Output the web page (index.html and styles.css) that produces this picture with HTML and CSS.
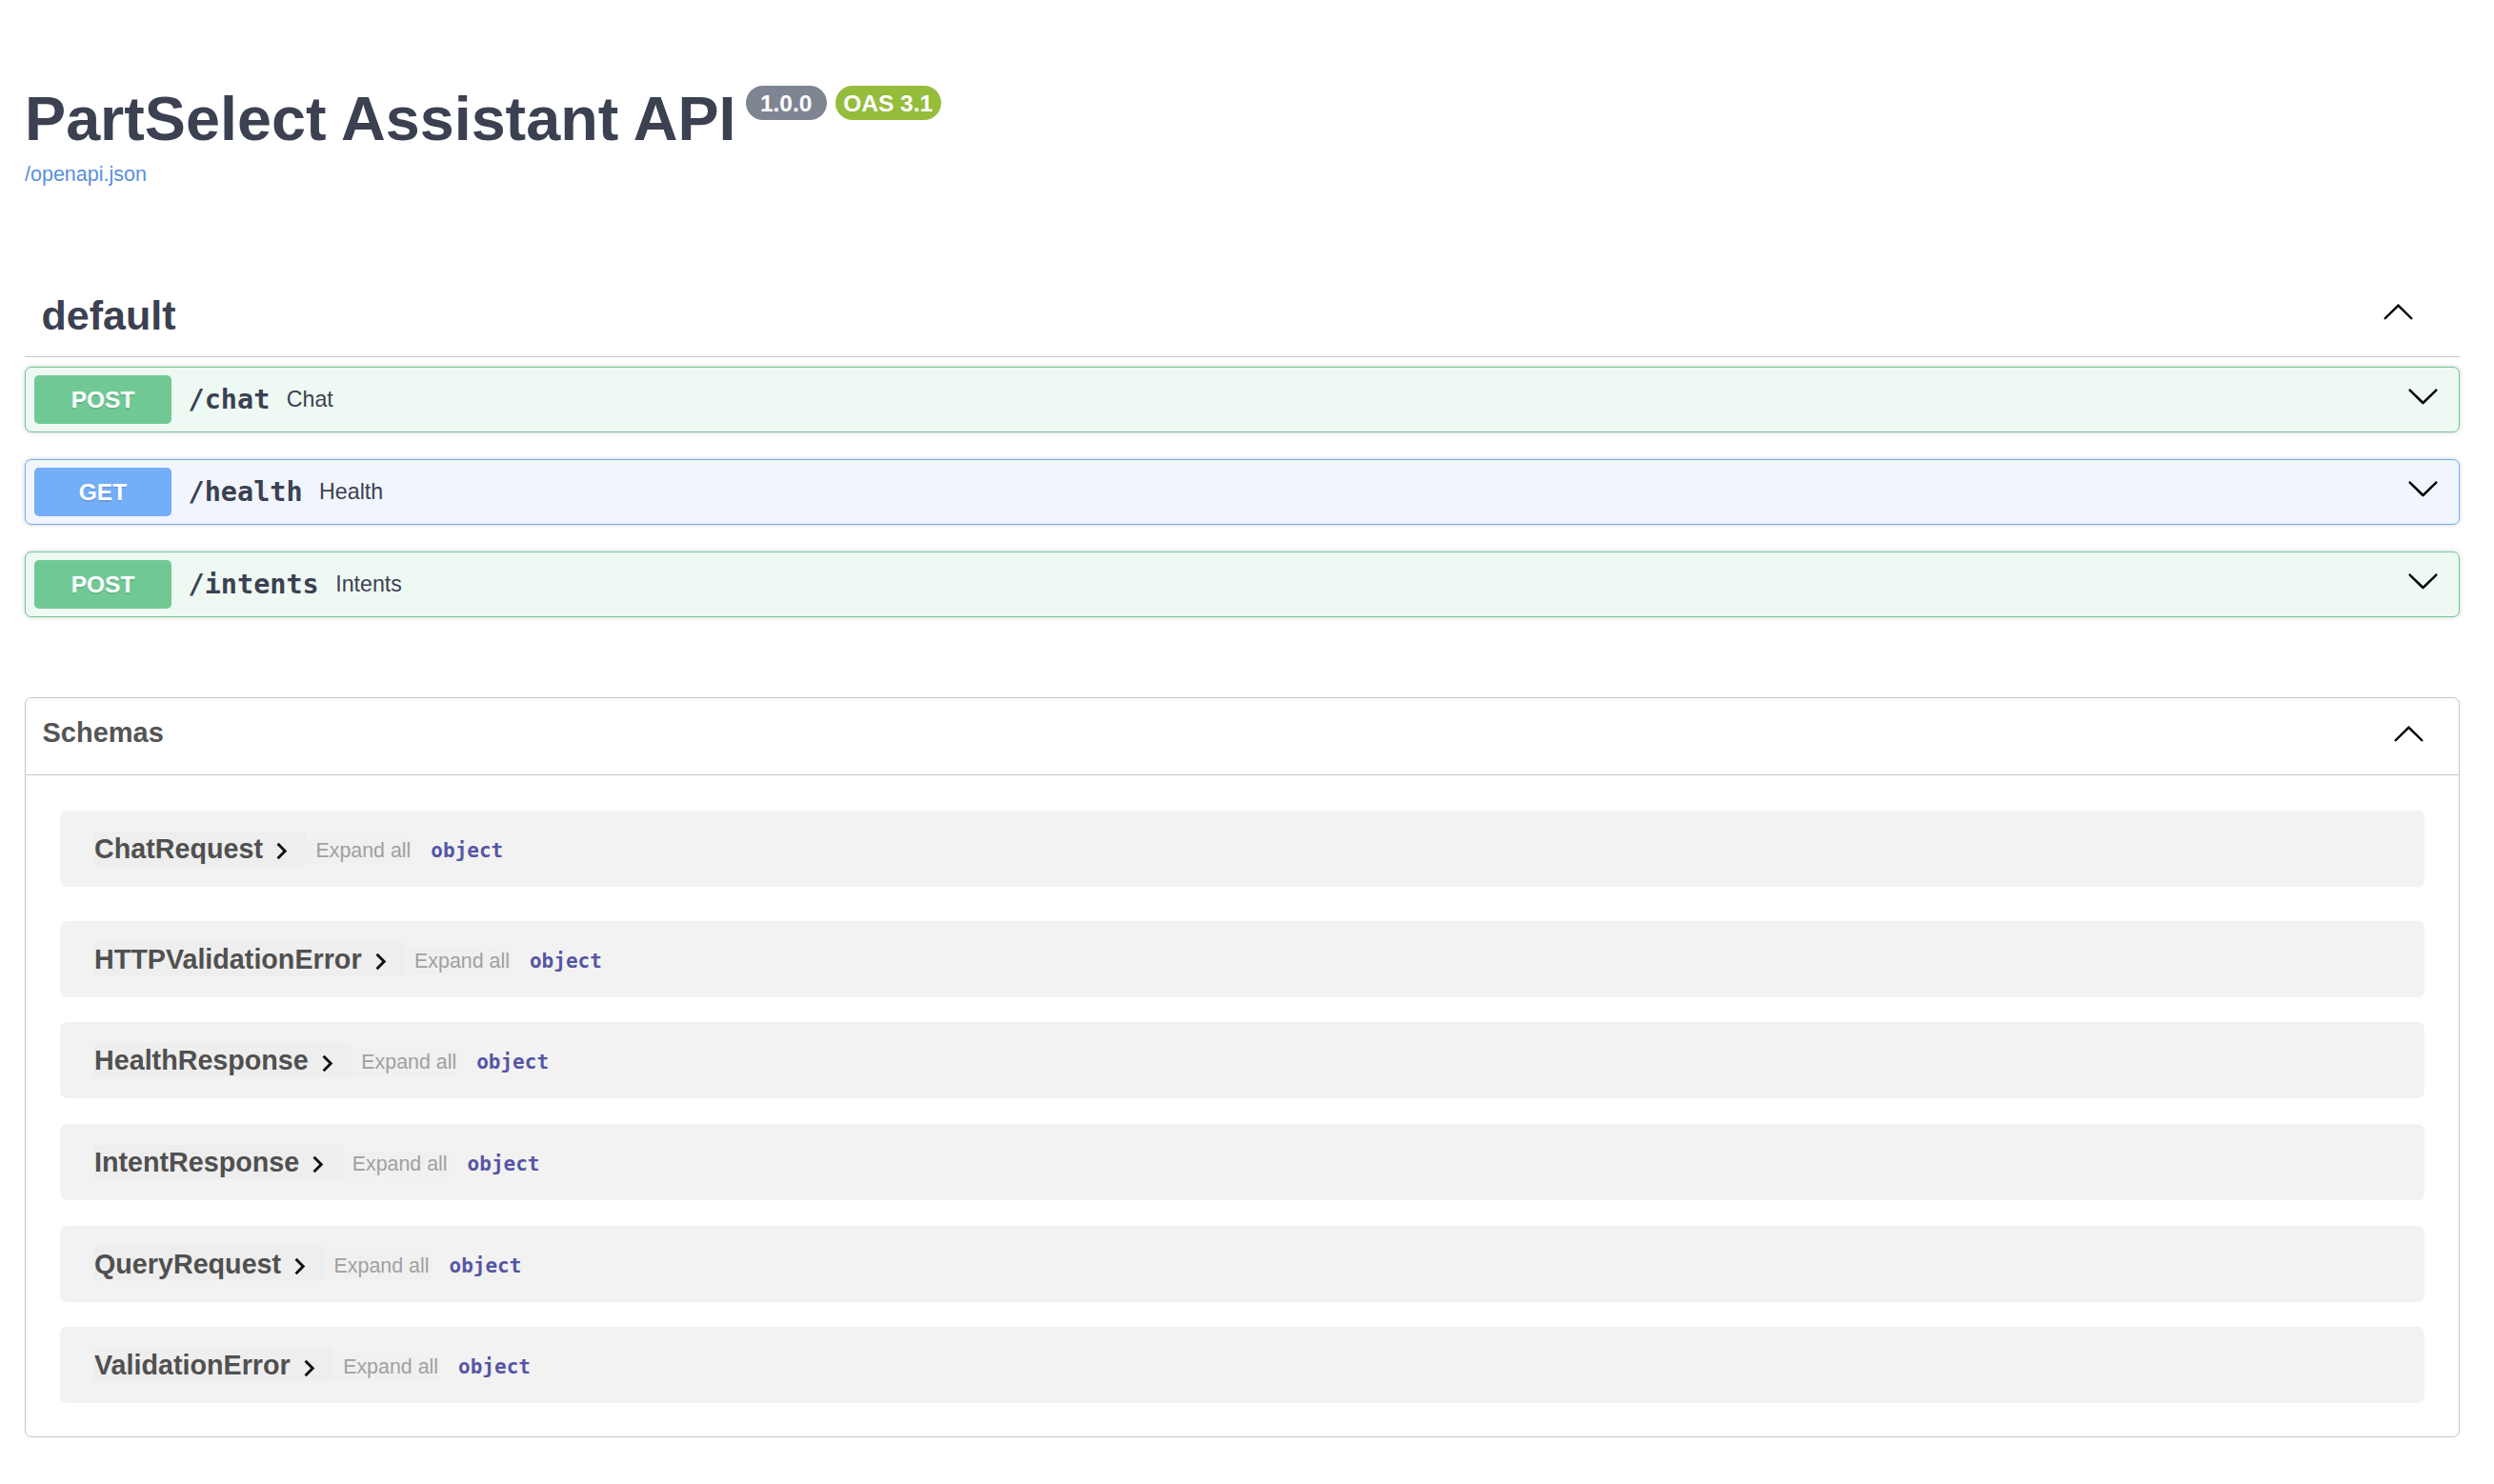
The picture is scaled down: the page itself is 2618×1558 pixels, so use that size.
FILE: index.html
```html
<!DOCTYPE html>
<html lang="en">
<head>
<meta charset="utf-8">
<title>PartSelect Assistant API - Swagger UI</title>
<link rel="stylesheet" href="styles.css">
</head>
<body>
<div class="wrapper">
  <div class="info">
    <h2 class="title">
      <span class="title-text">PartSelect Assistant API</span>
      <span class="badges">
        <small class="badge"> 1.0.0 </small>
        <small class="badge badge-oas">OAS 3.1</small>
      </span>
    </h2>
    <a class="spec-link" href="#">/openapi.json</a>
  </div>

  <section class="tag-section">
    <h3 class="tag">
      <span class="tag-name">default</span>
      <svg class="tag-arrow" viewBox="0 0 20 20" aria-hidden="true"><path d="M 17.418 14.908 C 17.69 15.176 18.127 15.176 18.397 14.908 C 18.667 14.64 18.668 14.207 18.397 13.939 L 10.489 6.109 C 10.219 5.841 9.782 5.841 9.51 6.109 L 1.602 13.939 C 1.332 14.207 1.332 14.64 1.602 14.908 C 1.873 15.176 2.311 15.176 2.581 14.908 L 10 7.767 L 17.418 14.908 Z"/></svg>
    </h3>

    <div class="opblock opblock-post">
      <span class="method">POST</span>
      <span class="path">/chat</span>
      <span class="desc">Chat</span>
      <svg class="op-arrow" viewBox="0 0 20 20" aria-hidden="true"><path d="M17.418 6.109c.272-.268.709-.268.979 0s.271.701 0 .969l-7.908 7.830c-.27.268-.707.268-.979 0l-7.908-7.830c-.27-.268-.27-.701 0-.969.271-.268.709-.268.979 0L10 13.250l7.418-7.141z"/></svg>
    </div>

    <div class="opblock opblock-get">
      <span class="method">GET</span>
      <span class="path">/health</span>
      <span class="desc">Health</span>
      <svg class="op-arrow" viewBox="0 0 20 20" aria-hidden="true"><path d="M17.418 6.109c.272-.268.709-.268.979 0s.271.701 0 .969l-7.908 7.830c-.27.268-.707.268-.979 0l-7.908-7.830c-.27-.268-.27-.701 0-.969.271-.268.709-.268.979 0L10 13.250l7.418-7.141z"/></svg>
    </div>

    <div class="opblock opblock-post">
      <span class="method">POST</span>
      <span class="path">/intents</span>
      <span class="desc">Intents</span>
      <svg class="op-arrow" viewBox="0 0 20 20" aria-hidden="true"><path d="M17.418 6.109c.272-.268.709-.268.979 0s.271.701 0 .969l-7.908 7.830c-.27.268-.707.268-.979 0l-7.908-7.830c-.27-.268-.27-.701 0-.969.271-.268.709-.268.979 0L10 13.250l7.418-7.141z"/></svg>
    </div>
  </section>

  <section class="models">
    <h4 class="models-header">
      <span class="models-title">Schemas</span>
      <svg class="models-arrow" viewBox="0 0 20 20" aria-hidden="true"><path d="M 17.418 14.908 C 17.69 15.176 18.127 15.176 18.397 14.908 C 18.667 14.64 18.668 14.207 18.397 13.939 L 10.489 6.109 C 10.219 5.841 9.782 5.841 9.51 6.109 L 1.602 13.939 C 1.332 14.207 1.332 14.64 1.602 14.908 C 1.873 15.176 2.311 15.176 2.581 14.908 L 10 7.767 L 17.418 14.908 Z"/></svg>
    </h4>
    <div class="models-body">
      <div class="model-row">
        <span class="model-btn"><span class="model-title">ChatRequest</span><svg class="model-toggle" viewBox="0 0 24 24" aria-hidden="true"><path d="M10 6L8.59 7.41 13.17 12l-4.58 4.59L10 18l6-6z"/></svg></span>
        <span class="expand">Expand all</span>
        <span class="type">object</span>
      </div>
      <div class="model-row">
        <span class="model-btn"><span class="model-title">HTTPValidationError</span><svg class="model-toggle" viewBox="0 0 24 24" aria-hidden="true"><path d="M10 6L8.59 7.41 13.17 12l-4.58 4.59L10 18l6-6z"/></svg></span>
        <span class="expand">Expand all</span>
        <span class="type">object</span>
      </div>
      <div class="model-row">
        <span class="model-btn"><span class="model-title">HealthResponse</span><svg class="model-toggle" viewBox="0 0 24 24" aria-hidden="true"><path d="M10 6L8.59 7.41 13.17 12l-4.58 4.59L10 18l6-6z"/></svg></span>
        <span class="expand">Expand all</span>
        <span class="type">object</span>
      </div>
      <div class="model-row">
        <span class="model-btn"><span class="model-title">IntentResponse</span><svg class="model-toggle" viewBox="0 0 24 24" aria-hidden="true"><path d="M10 6L8.59 7.41 13.17 12l-4.58 4.59L10 18l6-6z"/></svg></span>
        <span class="expand">Expand all</span>
        <span class="type">object</span>
      </div>
      <div class="model-row">
        <span class="model-btn"><span class="model-title">QueryRequest</span><svg class="model-toggle" viewBox="0 0 24 24" aria-hidden="true"><path d="M10 6L8.59 7.41 13.17 12l-4.58 4.59L10 18l6-6z"/></svg></span>
        <span class="expand">Expand all</span>
        <span class="type">object</span>
      </div>
      <div class="model-row">
        <span class="model-btn"><span class="model-title">ValidationError</span><svg class="model-toggle" viewBox="0 0 24 24" aria-hidden="true"><path d="M10 6L8.59 7.41 13.17 12l-4.58 4.59L10 18l6-6z"/></svg></span>
        <span class="expand">Expand all</span>
        <span class="type">object</span>
      </div>
    </div>
  </section>
</div>
</body>
</html>
```

FILE: styles.css
```css
* {
  box-sizing: border-box;
}

html,
body {
  margin: 0;
  padding: 0;
  background: #ffffff;
}

body {
  font-family: "Liberation Sans", Arial, Helvetica, sans-serif;
  color: #3b4151;
}

.wrapper {
  padding: 0 36px 0 26px;
}

/* ---------- info header ---------- */
.info {
  padding-top: 88px;
}

.title {
  display: flex;
  align-items: flex-start;
  margin: 0;
  font-size: 64.7px;
  line-height: 74.3px;
  font-weight: 700;
  color: #3b4151;
}

.badges {
  display: flex;
  gap: 9px;
  margin-left: 10px;
  margin-top: 2px;
}

.badge {
  display: block;
  padding: 3.5px 8.5px;
  border-radius: 57px;
  background: #7f8493;
  color: #ffffff;
  font-size: 24.5px;
  line-height: 29px;
  font-weight: 700;
  white-space: pre;
}

.badge-oas {
  background: #94bd3b;
}

.spec-link {
  display: inline-block;
  margin-top: 8.5px;
  font-size: 21.5px;
  line-height: 24px;
  color: #5b8edc;
  text-decoration: none;
}

/* ---------- operations ---------- */
.tag {
  display: flex;
  align-items: flex-start;
  margin: 96.6px 0 10px;
  padding: 16px 35px 19px 17.5px;
  border-bottom: 1px solid rgba(59, 65, 81, 0.3);
  font-size: 43px;
  line-height: 48px;
  font-weight: 700;
  color: #3b4151;
}

.tag-name {
  flex: 1;
}

.tag-arrow {
  width: 35px;
  height: 35px;
  flex-shrink: 0;
  margin-top: 2px;
  margin-right: 12.5px;
  fill: #000000;
}

.opblock {
  display: flex;
  align-items: center;
  height: 69px;
  padding: 0 9px;
  margin-bottom: 28px;
  border: 1px solid;
  border-radius: 7px;
  box-shadow: 0 0 5px rgba(0, 0, 0, 0.19);
}

.opblock:last-child {
  margin-bottom: 0;
}

.opblock-post {
  border-color: #70c995;
  background: #eff9f4;
}

.opblock-get {
  border-color: #74adf8;
  background: #f0f5fe;
}

.method {
  flex-shrink: 0;
  width: 144px;
  height: 51px;
  line-height: 51px;
  border-radius: 5px;
  color: #ffffff;
  font-size: 24.5px;
  font-weight: 700;
  text-align: center;
  text-shadow: 0 2px 0 rgba(0, 0, 0, 0.1);
}

.opblock-post .method {
  background: #70c995;
}

.opblock-get .method {
  background: #74adf8;
}

.path {
  padding: 0 17.5px;
  font-family: "DejaVu Sans Mono", "Liberation Mono", monospace;
  font-weight: 700;
  font-size: 28.5px;
  color: #3b4151;
}

.desc {
  font-size: 23.2px;
  color: #3b4151;
}

.op-arrow {
  width: 35px;
  height: 35px;
  flex-shrink: 0;
  margin-left: auto;
  margin-right: 11.5px;
  margin-bottom: 9.5px;
  fill: #000000;
}

/* ---------- schemas ---------- */
.models {
  margin-top: 83.3px;
  border: 1px solid rgba(59, 65, 81, 0.3);
  border-radius: 7px;
}

.models-header {
  display: flex;
  align-items: flex-start;
  margin: 0;
  padding: 19px 35.5px 26px 17.5px;
  border-bottom: 1px solid rgba(59, 65, 81, 0.3);
  font-size: 29px;
  line-height: 35px;
  font-weight: 700;
  color: #555555;
}

.models-title {
  flex: 1;
}

.models-arrow {
  width: 35px;
  height: 35px;
  flex-shrink: 0;
  fill: #000000;
}

.models-body {
  display: flex;
  flex-direction: column;
  gap: 26.67px;
  padding: 37px 36px 35px;
}

.model-row {
  display: flex;
  align-items: center;
  height: 80px;
  padding-left: 36px;
  background: rgba(0, 0, 0, 0.05);
  border-radius: 7px;
}

.model-row:first-child {
  margin-bottom: 9.33px;
}

.model-btn {
  display: flex;
  align-items: center;
  height: 36px;
  padding-right: 8.5px;
  background: rgba(0, 0, 0, 0.016);
}

.model-title {
  font-size: 28.7px;
  line-height: 32px;
  font-weight: 700;
  color: #505050;
}

.model-toggle {
  width: 35px;
  height: 35px;
  margin-left: 2px;
  margin-top: 6px;
  fill: #111111;
}

.expand {
  height: 27px;
  line-height: 27px;
  margin-top: 5px;
  padding: 0 2px 0 10px;
  background: rgba(0, 0, 0, 0.008);
  font-size: 21.4px;
  color: #a0a0a0;
}

.type {
  margin-left: 19px;
  margin-top: 4px;
  font-family: "DejaVu Sans Mono", "Liberation Mono", monospace;
  font-weight: 700;
  font-size: 21px;
  color: #5555a5;
}
```
